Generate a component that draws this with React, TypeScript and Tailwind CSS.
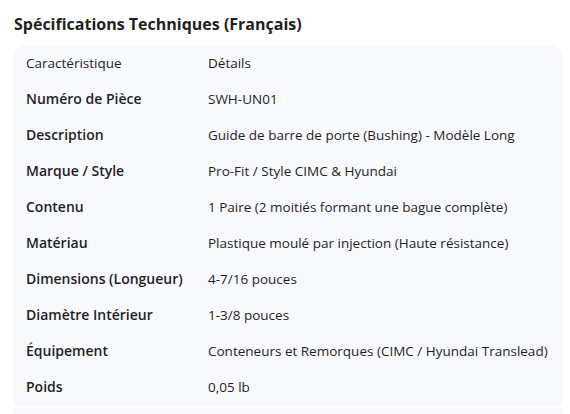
const rows: [string, string][] = [
  ["Numéro de Pièce", "SWH-UN01"],
  ["Description", "Guide de barre de porte (Bushing) - Modèle Long"],
  ["Marque / Style", "Pro-Fit / Style CIMC & Hyundai"],
  ["Contenu", "1 Paire (2 moitiés formant une bague complète)"],
  ["Matériau", "Plastique moulé par injection (Haute résistance)"],
  ["Dimensions (Longueur)", "4-7/16 pouces"],
  ["Diamètre Intérieur", "1-3/8 pouces"],
  ["Équipement", "Conteneurs et Remorques (CIMC / Hyundai Translead)"],
  ["Poids", "0,05 lb"],
];

export default function App() {
  return (
    <div
      className="w-[570px] h-[414px] overflow-hidden bg-white text-[#1f1f1f]"
      style={{ fontFamily: "'Open Sans', 'Noto Sans', sans-serif" }}
    >
      <h2 className="pl-[14px] pt-[12px] h-[45px] text-[16px] font-bold leading-[24px]">
        Spécifications Techniques (Français)
      </h2>
      <div className="ml-[14px] w-[548px] rounded-t-[12px] bg-[#f8f9fc]">
        <div className="grid grid-cols-[182px_366px] h-[36px] items-center text-[13.5px] leading-5 whitespace-nowrap">
          <div className="px-3">Caractéristique</div>
          <div className="px-3">Détails</div>
        </div>
        {rows.map(([k, v]) => (
          <div
            key={k}
            className="grid grid-cols-[182px_366px] h-[36px] items-center text-[13.5px] leading-5 whitespace-nowrap"
          >
            <div className="px-3 text-[14px] font-semibold">{k}</div>
            <div className="px-3">{v}</div>
          </div>
        ))}
      </div>
      <div className="ml-[14px] mt-[3px] w-[548px] h-[10px] bg-[#f8f9fc]" />
    </div>
  );
}
